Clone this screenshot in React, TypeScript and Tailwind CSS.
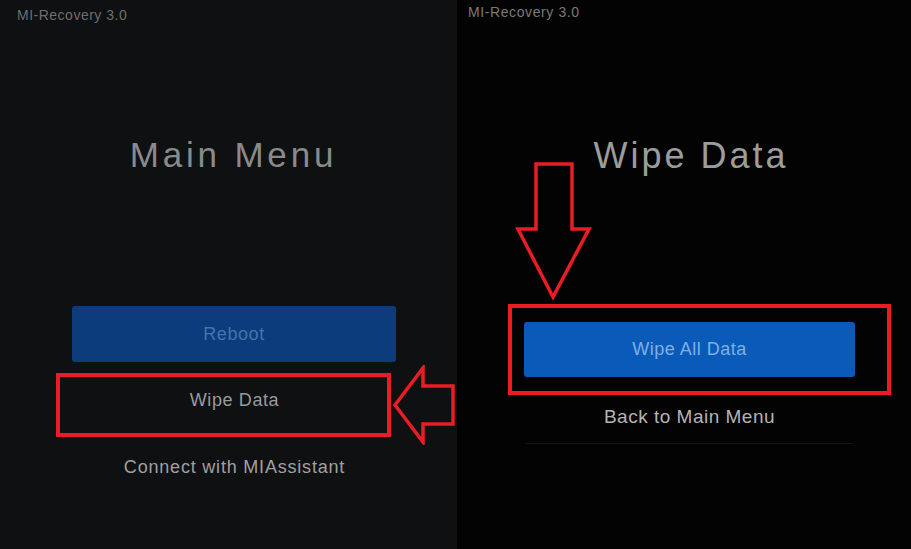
import React from "react";

const font = { fontFamily: '"Liberation Sans", Arial, sans-serif' };

function LeftArrow() {
  return (
    <svg width="64" height="80" viewBox="0 0 64 80" className="shrink-0">
      <polygon
        points="3,40 31,3 31,21 61,21 61,59 31,59 31,77"
        fill="none"
        stroke="#ec1c24"
        strokeWidth="3.5"
        strokeLinejoin="miter"
      />
    </svg>
  );
}

function DownArrow() {
  return (
    <svg width="77" height="139" viewBox="0 0 77 139" className="block">
      <polygon
        points="21,3 57,3 57,68 74,68 38,136 3,68 21,68"
        fill="none"
        stroke="#ec1c24"
        strokeWidth="3.5"
        strokeLinejoin="miter"
      />
    </svg>
  );
}

export default function App() {
  return (
    <div className="flex w-[911px] h-[549px] overflow-hidden" style={font}>
      {/* Main menu screen */}
      <div className="flex flex-col w-[457px] h-full bg-[#0f1012]">
        <div className="pt-[7px] pl-[17px] text-[14px] leading-[16px] tracking-[0.5px] text-[#6e6e6e]">
          MI-Recovery 3.0
        </div>
        <div className="mt-[114px] pl-[10px] text-center text-[35px] leading-[35px] tracking-[3.8px] text-[#8a8a8a]">
          Main Menu
        </div>
        <div className="mt-[134px] ml-[72px] w-[324px] h-[56px] rounded-[3px] bg-[#0d3c7c] flex items-center justify-center text-[18px] tracking-[0.6px] text-[#4673aa]">
          Reboot
        </div>
        <div className="mt-[3px] ml-[56px] flex items-center gap-[1px]">
          <div className="w-[335px] h-[64px] border-4 border-[#ec1c24] pl-[22px] pb-[9px] flex items-center justify-center text-[18px] tracking-[0.6px] text-[#9a9a9a]">
            Wipe Data
          </div>
          <LeftArrow />
        </div>
        <div className="mt-[10px] pl-[12px] text-center text-[18px] leading-[24px] tracking-[0.8px] text-[#a0a0a0]">
          Connect with MIAssistant
        </div>
      </div>

      {/* Wipe data screen */}
      <div className="flex flex-col flex-1 h-full bg-[#030303]">
        <div className="pt-[4px] pl-[11px] text-[14px] leading-[16px] tracking-[0.6px] text-[#7a7a7a]">
          MI-Recovery 3.0
        </div>
        <div className="mt-[118px] pl-[14px] text-center text-[36px] leading-[36px] tracking-[3px] text-[#9c9c9c]">
          Wipe Data
        </div>
        <div className="-mt-[13px] ml-[58px]">
          <DownArrow />
        </div>
        <div className="mt-[4px] ml-[51px] w-[383px] h-[91px] border-4 border-[#ec1c24] pl-[12px] pr-[32px] py-[14px]">
          <div className="h-full rounded-[3px] bg-[#0a5bb9] flex items-center justify-center text-[18px] tracking-[0.5px] text-[#7fb0e4]">
            Wipe All Data
          </div>
        </div>
        <div className="mt-[10px] ml-[69px] w-[327px] pb-[14px] border-b border-[#141414] text-center text-[19px] leading-[24px] tracking-[0.5px] text-[#b4b4b4]">
          Back to Main Menu
        </div>
      </div>
    </div>
  );
}
